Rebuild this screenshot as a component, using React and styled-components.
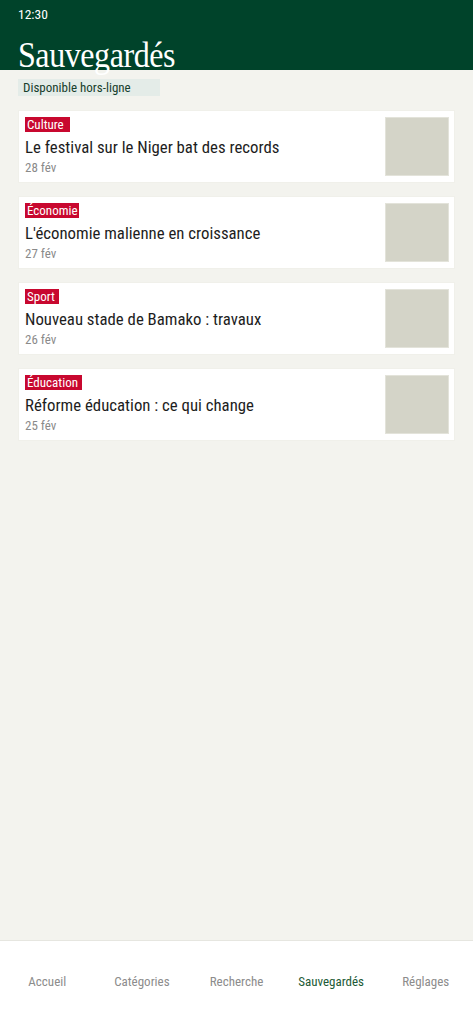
import React from 'react';
import styled, { createGlobalStyle } from 'styled-components';

const GlobalStyle = createGlobalStyle`
  html, body {
    margin: 0;
    padding: 0;
    background: #f3f3ee;
  }
  body {
    font-family: Roboto, "Noto Sans", sans-serif;
    font-stretch: 85%;
  }
`;

const Screen = styled.div`
  width: 473px;
  height: 1024px;
  display: flex;
  flex-direction: column;
  background: #f3f3ee;
  overflow: hidden;
`;

const Header = styled.header`
  flex-shrink: 0;
  height: 70px;
  background: #00432a;
  padding: 0 18px;
  box-sizing: border-box;
`;

const StatusBar = styled.div`
  height: 27px;
  display: flex;
  align-items: center;
  color: #ffffff;
  font-size: 13.5px;
`;

const Title = styled.h1`
  margin: 8px 0 0;
  font-family: "Liberation Serif", serif;
  font-weight: 400;
  font-size: 36px;
  line-height: 40px;
  letter-spacing: -0.5px;
  color: #ffffff;
  white-space: nowrap;
  transform: scaleX(0.89);
  transform-origin: left center;
`;

const Content = styled.main`
  flex: 1;
  padding: 9px 18px 0;
  display: flex;
  flex-direction: column;
`;

const OfflineBadge = styled.div`
  align-self: flex-start;
  width: 142px;
  height: 17px;
  box-sizing: border-box;
  padding-left: 5px;
  background: #e4ece8;
  color: #17402c;
  font-size: 13px;
  line-height: 18px;
  margin-bottom: 14px;
`;

const List = styled.div`
  display: flex;
  flex-direction: column;
  gap: 13px;
`;

const Card = styled.article`
  background: #ffffff;
  height: 73px;
  box-sizing: border-box;
  padding: 6px 5px 6px 6px;
  display: flex;
  justify-content: space-between;
  border: 1px solid #f0f0ea;
`;

const Body = styled.div`
  display: flex;
  flex-direction: column;
  align-items: flex-start;
`;

const Tag = styled.span`
  box-sizing: border-box;
  min-width: ${(p) => p.$w}px;
  background: #c8082f;
  color: #ffffff;
  font-size: 13px;
  line-height: 15px;
  height: 15px;
  padding: 0 1px 0 2px;
  white-space: nowrap;
`;

const Headline = styled.div`
  margin-top: 4px;
  font-size: 16.8px;
  line-height: 22px;
  color: #1d1d1d;
`;

const DateText = styled.div`
  font-size: 13px;
  line-height: 16px;
  color: #8a8a8a;
  margin-top: 2px;
`;

const Thumb = styled.div`
  width: 64px;
  height: 59px;
  background: #d4d4c8;
  border: 1px solid #e3e3da;
  box-sizing: border-box;
`;

const Nav = styled.nav`
  flex-shrink: 0;
  height: 84px;
  background: #ffffff;
  border-top: 1px solid #e6e6e0;
  box-sizing: border-box;
  display: grid;
  grid-template-columns: repeat(5, 1fr);
  align-items: center;
  padding-bottom: 2px;
`;

const NavItem = styled.div`
  text-align: center;
  font-size: 13px;
  color: ${(p) => (p.$active ? '#1c5a36' : '#8c8c8c')};
`;

const articles = [
  { tag: 'Culture', w: 45, title: 'Le festival sur le Niger bat des records', date: '28 fév' },
  { tag: 'Économie', w: 51, title: "L'économie malienne en croissance", date: '27 fév' },
  { tag: 'Sport', w: 34, title: 'Nouveau stade de Bamako : travaux', date: '26 fév' },
  { tag: 'Éducation', w: 57, title: 'Réforme éducation : ce qui change', date: '25 fév' },
];

const tabs = ['Accueil', 'Catégories', 'Recherche', 'Sauvegardés', 'Réglages'];

export default function App() {
  return (
    <Screen>
      <GlobalStyle />
      <Header>
        <StatusBar>12:30</StatusBar>
        <Title>Sauvegardés</Title>
      </Header>
      <Content>
        <OfflineBadge>Disponible hors-ligne</OfflineBadge>
        <List>
          {articles.map((a) => (
            <Card key={a.title}>
              <Body>
                <Tag $w={a.w}>{a.tag}</Tag>
                <Headline>{a.title}</Headline>
                <DateText>{a.date}</DateText>
              </Body>
              <Thumb />
            </Card>
          ))}
        </List>
      </Content>
      <Nav>
        {tabs.map((t) => (
          <NavItem key={t} $active={t === 'Sauvegardés'}>
            {t}
          </NavItem>
        ))}
      </Nav>
    </Screen>
  );
}
